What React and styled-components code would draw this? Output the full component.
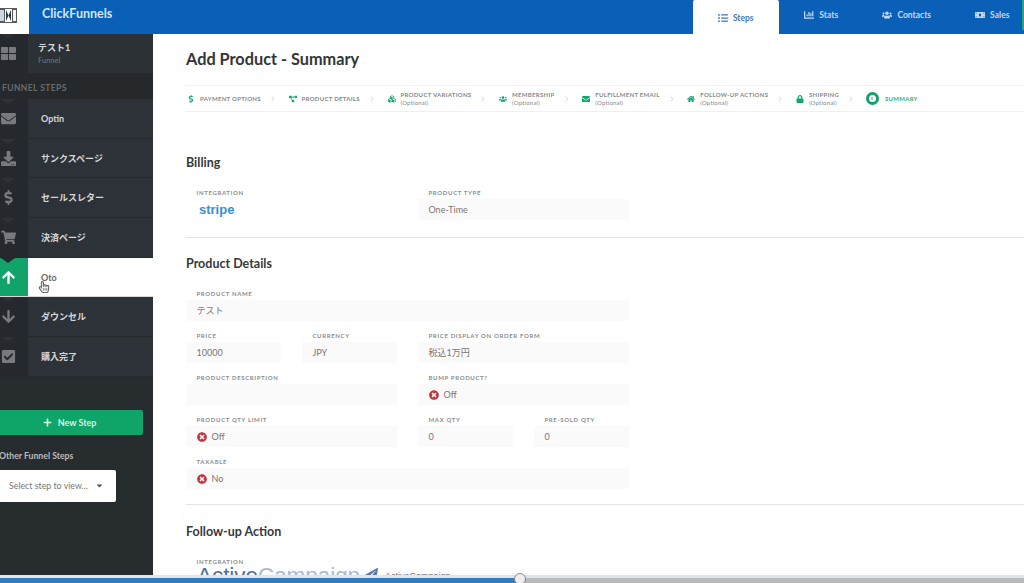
import styled, { createGlobalStyle } from "styled-components";
import {
  FaThLarge,
  FaEnvelope,
  FaDownload,
  FaDollarSign,
  FaShoppingCart,
  FaArrowUp,
  FaArrowDown,
  FaCheckSquare,
  FaPlus,
  FaListUl,
  FaChartBar,
  FaUsers,
  FaMoneyBill,
  FaCubes,
  FaProjectDiagram,
  FaHome,
  FaLock,
  FaChevronRight,
  FaCaretDown,
  FaTimesCircle,
  FaRegHandPointer,
  FaPaperPlane,
} from "react-icons/fa";

const FONT = `Lato, "Noto Sans CJK JP", sans-serif`;

const funnelSteps = [
  { name: "Optin", icon: FaEnvelope },
  { name: "サンクスページ", icon: FaDownload },
  { name: "セールスレター", icon: FaDollarSign },
  { name: "決済ページ", icon: FaShoppingCart },
  { name: "Oto", icon: FaArrowUp, active: true },
  { name: "ダウンセル", icon: FaArrowDown },
  { name: "購入完了", icon: FaCheckSquare },
];

const wizard = [
  { name: "Payment Options", icon: FaDollarSign },
  { name: "Product Details", icon: FaProjectDiagram },
  { name: "Product Variations", icon: FaCubes, optional: true },
  { name: "Membership", icon: FaUsers, optional: true },
  { name: "Fulfillment Email", icon: FaEnvelope, optional: true },
  { name: "Follow-up Actions", icon: FaHome, optional: true },
  { name: "Shipping", icon: FaLock, optional: true },
];

const tabs = [
  { name: "Steps", icon: FaListUl, active: true },
  { name: "Stats", icon: FaChartBar },
  { name: "Contacts", icon: FaUsers },
  { name: "Sales", icon: FaMoneyBill },
];

function Field({ label, value, span = 4, off }) {
  return (
    <FieldBox $span={span}>
      <FieldLabel>{label}</FieldLabel>
      <FieldValue>
        {off && <FaTimesCircle color="#c4343f" size={10} />}
        {value}
      </FieldValue>
    </FieldBox>
  );
}

export default function App() {
  return (
    <Page>
      <GlobalStyle />
      <TopBar>
        <LogoBox>
          <LogoMark viewBox="0 0 17 15">
            <rect x="0" y="0" width="17" height="15" fill="#5a5a5a" />
            <rect x="0" y="2" width="4" height="11" fill="#cfd6dc" />
            <rect x="5" y="1" width="7" height="13" fill="#fff" />
            <path d="M6 2l2.5 5.5L6 13zM11 2L8.5 7.5 11 13z" fill="#27384a" />
            <rect x="13" y="2" width="3" height="11" fill="#f4f4f4" />
          </LogoMark>
        </LogoBox>
        <Brand>ClickFunnels</Brand>
        <Tabs>
          {tabs.map((t) => (
            <Tab key={t.name} $active={t.active}>
              <t.icon size={10} />
              {t.name}
            </Tab>
          ))}
        </Tabs>
        <GreenEdge />
      </TopBar>

      <Body>
        <Sidebar>
          <FunnelHead>
            <IconCell>
              <FaThLarge size={15} />
            </IconCell>
            <FunnelTitle>
              <strong>テスト1</strong>
              <span>Funnel</span>
            </FunnelTitle>
          </FunnelHead>
          <SideLabel>FUNNEL STEPS</SideLabel>
          {funnelSteps.map((s) => (
            <StepRow key={s.name} $active={s.active}>
              <IconCell $active={s.active}>
                <s.icon size={15} />
              </IconCell>
              <StepName $active={s.active}>{s.name}</StepName>
              {s.active && (
                <Pointer>
                  <FaRegHandPointer size={12} />
                </Pointer>
              )}
            </StepRow>
          ))}
          <NewStep>
            <FaPlus size={9} />
            New Step
          </NewStep>
          <OtherLabel>Other Funnel Steps</OtherLabel>
          <StepSelect>
            Select step to view...
            <FaCaretDown size={9} color="#555" />
          </StepSelect>
        </Sidebar>

        <Main>
          <Title>Add Product - Summary</Title>
          <Wizard>
            {wizard.map((w) => (
              <WizardItem key={w.name}>
                <WizardIcon>
                  <w.icon size={8} color="#17a56f" />
                </WizardIcon>
                <WizardText>
                  {w.name}
                  {w.optional && <small>(Optional)</small>}
                </WizardText>
                <Chevron>
                  <FaChevronRight size={6} />
                </Chevron>
              </WizardItem>
            ))}
            <WizardItem>
              <Ring>
                <i />
              </Ring>
              <WizardText $current>Summary</WizardText>
            </WizardItem>
          </Wizard>

          <Section $first>
            <Heading>Billing</Heading>
            <Fields>
              <FieldBox $span={2}>
                <FieldLabel>Integration</FieldLabel>
                <Stripe>stripe</Stripe>
              </FieldBox>
              <Field label="Product Type" value="One-Time" span={2} />
            </Fields>
          </Section>

          <Section>
            <Heading>Product Details</Heading>
            <Fields>
              <Field label="Product Name" value="テスト" />
              <Field label="Price" value="10000" span={1} />
              <Field label="Currency" value="JPY" span={1} />
              <Field label="Price Display On Order Form" value="税込1万円" span={2} />
              <Field label="Product Description" value="" span={2} />
              <Field label="Bump Product?" value="Off" span={2} off />
              <Field label="Product Qty Limit" value="Off" span={2} off />
              <Field label="Max Qty" value="0" span={1} />
              <Field label="Pre-Sold Qty" value="0" span={1} />
              <Field label="Taxable" value="No" off />
            </Fields>
          </Section>

          <Section>
            <Heading>Follow-up Action</Heading>
            <FieldLabel>Integration</FieldLabel>
            <ActiveLogo>
              Active<span>Campaign</span>
              <FaPaperPlane size={13} color="#5b7aa8" />
              <em>ActiveCampaign</em>
            </ActiveLogo>
          </Section>
        </Main>
      </Body>

      <Scrubber>
        <Played />
        <Knob />
      </Scrubber>
    </Page>
  );
}

const GlobalStyle = createGlobalStyle`
  html, body {
    margin: 0;
    padding: 0;
    background: #fff;
    overflow: hidden;
  }
  * {
    box-sizing: border-box;
  }
`;

const Page = styled.div`
  display: flex;
  flex-direction: column;
  width: 1024px;
  height: 583px;
  overflow: hidden;
  font-family: ${FONT};
`;

const TopBar = styled.header`
  display: flex;
  position: relative;
  align-items: stretch;
  flex: 0 0 34px;
  background: #0a5fb7;
`;

const LogoBox = styled.div`
  display: flex;
  align-items: center;
  width: 29px;
  padding-bottom: 4px;
  background: #fff;
`;

const LogoMark = styled.svg`
  flex: none;
  width: 17px;
  height: 15px;
`;

const Brand = styled.div`
  align-self: center;
  margin: -7px 0 0 13px;
  font-size: 12.5px;
  font-weight: 700;
  color: #cfe6fa;
`;

const Tabs = styled.nav`
  display: flex;
  margin-left: auto;
  margin-right: -11px;
`;

const GreenEdge = styled.span`
  position: absolute;
  top: 0;
  right: 0;
  width: 2px;
  height: 30px;
  background: #2aa37a;
`;

const Tab = styled.div`
  display: flex;
  align-items: center;
  justify-content: center;
  gap: 5px;
  width: 85.5px;
  padding-top: ${(p) => (p.$active ? "2px" : "0")};
  padding-bottom: ${(p) => (p.$active ? "0" : "4px")};
  border-radius: 2px 2px 0 0;
  font-size: 8.5px;
  font-weight: 700;
  background: ${(p) => (p.$active ? "#fff" : "transparent")};
  color: ${(p) => (p.$active ? "#3f79b8" : "#c3d9ef")};
`;

const Body = styled.div`
  display: flex;
  flex: 1;
  min-height: 0;
`;

const Sidebar = styled.aside`
  flex: 0 0 153px;
  background: #272c2f;
`;

const FunnelHead = styled.div`
  display: flex;
  height: 39px;
  background: #2c3136;
`;

const IconCell = styled.div`
  display: flex;
  flex: 0 0 28px;
  align-items: center;
  justify-content: center;
  position: relative;
  padding-right: 12px;
  background: ${(p) => (p.$active ? "#12a36a" : "#25292d")};
  color: ${(p) => (p.$active ? "#fff" : "#777b7e")};

  &::before {
    content: "";
    position: absolute;
    top: 0;
    left: 1px;
    border-left: 7px solid transparent;
    border-right: 7px solid transparent;
    border-top: 5px solid ${(p) => (p.$active ? "#25292d" : "#2d3135")};
  }
`;

const FunnelTitle = styled.div`
  display: flex;
  flex-direction: column;
  gap: 2px;
  padding: 8px 0 0 10px;
  color: #d8dadb;

  strong {
    font-size: 9px;
    font-weight: 700;
    line-height: 12px;
  }

  span {
    font-size: 7.5px;
    line-height: 9px;
    color: #73777a;
  }
`;

const SideLabel = styled.div`
  display: flex;
  align-items: center;
  height: 26px;
  padding: 3px 0 0 2px;
  background: #25292c;
  font-size: 8.5px;
  font-weight: 700;
  letter-spacing: 0.4px;
  color: #686c6f;
`;

const StepRow = styled.div`
  display: flex;
  position: relative;
  height: 39.7px;
  border-bottom: 1px solid ${(p) => (p.$active ? "#d9d9d9" : "#25292c")};
  background: ${(p) => (p.$active ? "#fff" : "#2d3238")};
`;

const StepName = styled.div`
  display: flex;
  align-items: center;
  padding-left: 13px;
  font-size: 9px;
  font-weight: 700;
  color: ${(p) => (p.$active ? "#666" : "#d5d7d8")};
`;

const Pointer = styled.span`
  position: absolute;
  top: 19px;
  left: 38px;
  color: #666;
`;

const NewStep = styled.button`
  display: flex;
  align-items: center;
  justify-content: center;
  gap: 6px;
  width: 143px;
  height: 25px;
  margin-top: 33px;
  padding: 0 4px 0 0;
  border: 0;
  border-radius: 0 2px 2px 0;
  font-family: ${FONT};
  font-size: 9px;
  font-weight: 700;
  background: #0fa568;
  color: #d9f3e8;
`;

const OtherLabel = styled.div`
  margin: 15px 0 8px -1px;
  font-size: 8.7px;
  font-weight: 700;
  line-height: 12px;
  color: #b9bcbe;
`;

const StepSelect = styled.div`
  display: flex;
  align-items: center;
  justify-content: space-between;
  width: 116px;
  height: 32px;
  padding: 0 12px 0 9px;
  border-radius: 0 2px 2px 0;
  font-size: 8.8px;
  background: #fff;
  color: #777;
`;

const Main = styled.main`
  flex: 1;
  min-width: 0;
  overflow: hidden;
  padding-left: 33px;
  background: #fff;
`;

const Title = styled.h1`
  margin: 15px 0 0;
  font-size: 16.3px;
  font-weight: 700;
  line-height: 20px;
  color: #333638;
`;

const Wizard = styled.div`
  display: flex;
  align-items: center;
  width: 838px;
  height: 27px;
  margin-top: 16px;
  border-top: 1px solid #f2f2f2;
  border-bottom: 1px solid #f0f0f0;
`;

const WizardItem = styled.div`
  display: flex;
  align-items: center;
`;

const WizardIcon = styled.span`
  display: flex;
  justify-content: center;
  width: 10px;
  margin-right: 4px;
`;

const WizardText = styled.div`
  display: flex;
  flex-direction: column;
  font-size: 6px;
  font-weight: 700;
  line-height: 7.5px;
  letter-spacing: 0.3px;
  text-transform: uppercase;
  color: ${(p) => (p.$current ? "#2fae7d" : "#85898c")};

  small {
    font-size: 6px;
    font-weight: 400;
    letter-spacing: 0.2px;
    text-transform: none;
  }
`;

const Chevron = styled.span`
  display: flex;
  margin: 0 11.7px 0 9px;
  color: #dedede;
`;

const Ring = styled.span`
  display: flex;
  align-items: center;
  justify-content: center;
  width: 13px;
  height: 13px;
  margin-right: 6px;
  border: 3.5px solid #14a06c;
  border-radius: 50%;

  i {
    width: 2px;
    height: 3px;
    background: #8fd2b7;
  }
`;

const Section = styled.section`
  width: 838px;
  margin-top: ${(p) => (p.$first ? "42px" : "0")};
  padding: ${(p) => (p.$first ? "0 0 17px" : "17px 0 15px")};
  border-bottom: 1px solid #e4e4e4;

  &:last-child {
    padding-top: 18px;
    border-bottom: 0;
  }
`;

const Heading = styled.h2`
  margin: 0 0 14px;
  font-size: 12.5px;
  font-weight: 700;
  line-height: 18px;
  color: #37393b;
`;

const Fields = styled.div`
  display: grid;
  grid-template-columns: repeat(4, 94.5px);
  column-gap: 21.5px;
  row-gap: 8px;
  width: 442.5px;
`;

const FieldBox = styled.div`
  grid-column: span ${(p) => p.$span};
`;

const FieldLabel = styled.div`
  height: 13px;
  padding-left: 10.5px;
  font-size: 6px;
  font-weight: 700;
  line-height: 13px;
  letter-spacing: 0.65px;
  text-transform: uppercase;
  color: #8a8d90;
`;

const FieldValue = styled.div`
  display: flex;
  align-items: center;
  gap: 5px;
  height: 21px;
  padding-left: 10.5px;
  font-size: 9px;
  background: #fafafa;
  color: #777;
`;

const Stripe = styled.div`
  height: 21px;
  padding-left: 13px;
  font-family: "Liberation Sans", sans-serif;
  font-size: 13px;
  font-weight: 700;
  line-height: 21px;
  color: #3d8ec9;
`;

const ActiveLogo = styled.div`
  display: flex;
  align-items: center;
  margin-top: -5px;
  padding-left: 11px;
  font-family: "Liberation Sans", sans-serif;
  font-size: 22.4px;
  line-height: 26px;
  color: #4e6f9f;

  span {
    color: #a8bad2;
  }

  svg {
    align-self: flex-start;
    margin: 5px 0 0 5px;
  }

  em {
    margin-left: 7px;
    font-size: 9px;
    font-style: normal;
    color: #667;
  }
`;

const Scrubber = styled.div`
  flex: 0 0 8px;
  position: relative;
  border-top: 3px solid #dde5ec;
  background: #b9b9b9;
`;

const Played = styled.div`
  width: 520px;
  height: 100%;
  background: #2f7cc1;
`;

const Knob = styled.span`
  position: absolute;
  top: -5px;
  left: 514px;
  width: 12px;
  height: 12px;
  border: 1px solid #888;
  border-radius: 50%;
  background: #eee;
`;
